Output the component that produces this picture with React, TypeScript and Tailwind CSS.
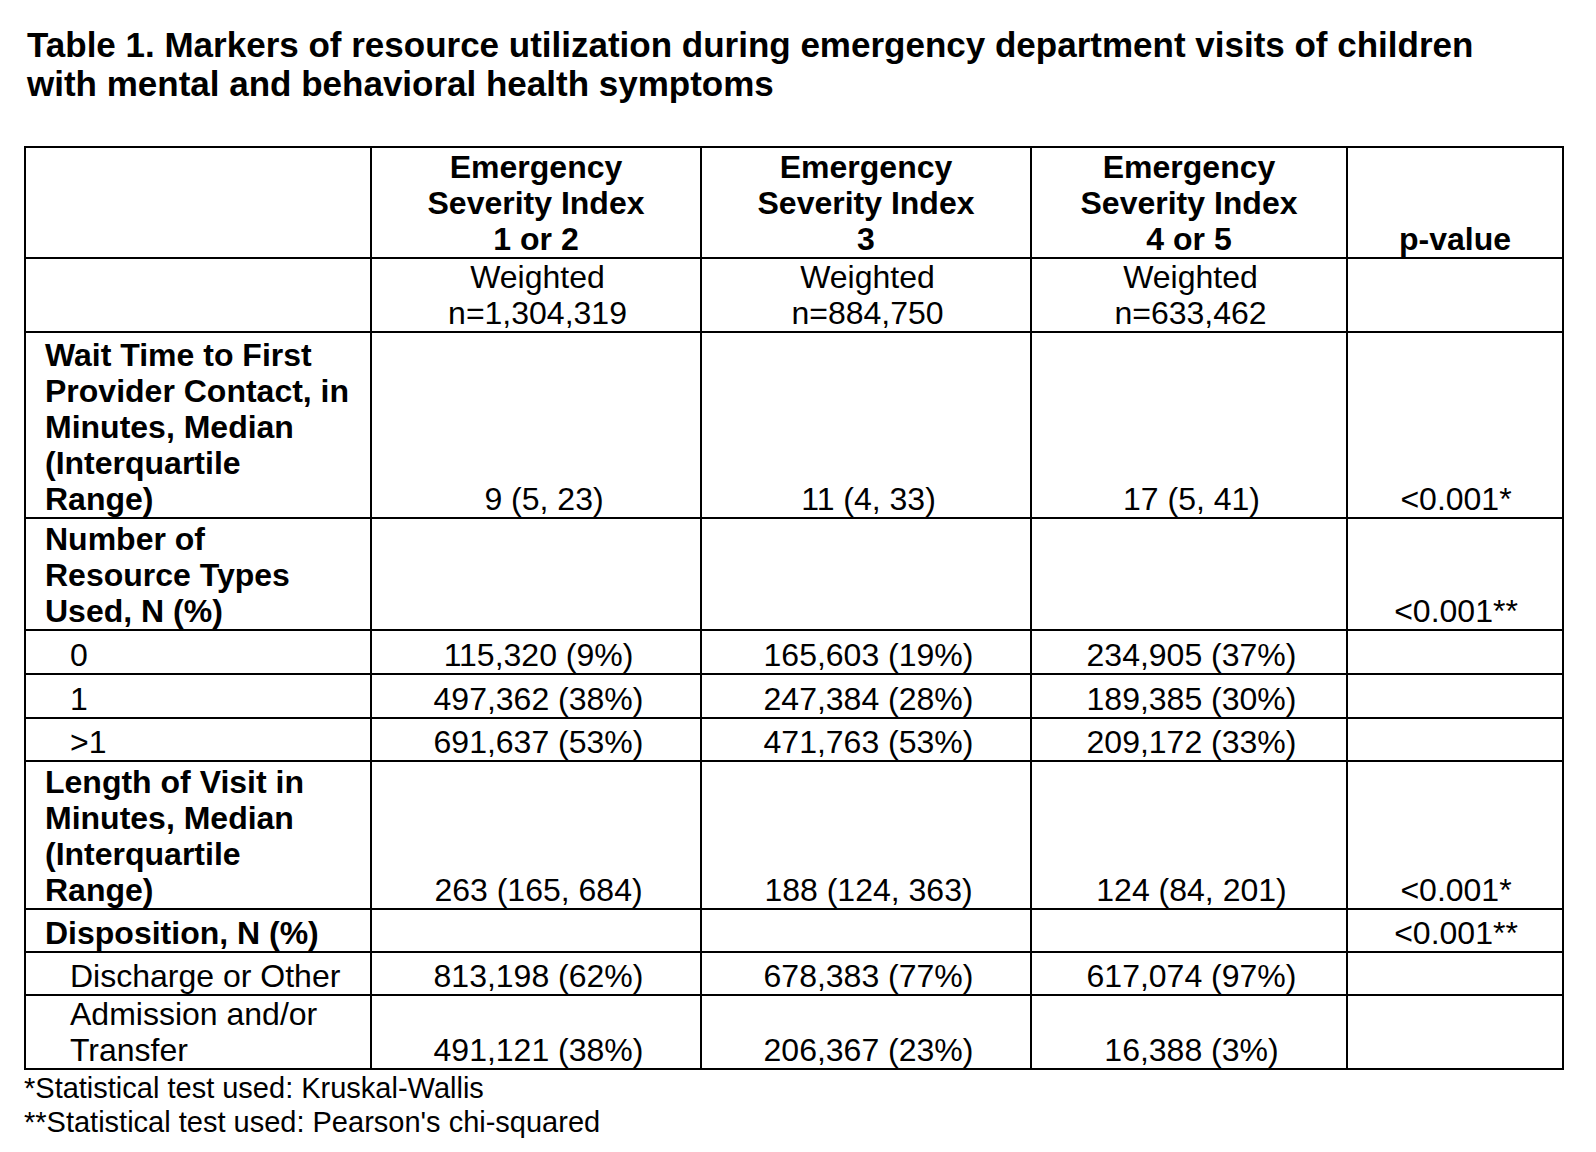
type Row = {
  label: string[];
  bold?: boolean;
  indent?: boolean;
  values: string[][];
  p?: string;
  h: string;
};

const rows: Row[] = [
  {
    label: ["Wait Time to First", "Provider Contact, in", "Minutes, Median", "(Interquartile", "Range)"],
    bold: true,
    values: [["9 (5, 23)"], ["11 (4, 33)"], ["17 (5, 41)"]],
    p: "<0.001*",
    h: "h-[186px]",
  },
  {
    label: ["Number of", "Resource Types", "Used, N (%)"],
    bold: true,
    values: [[], [], []],
    p: "<0.001**",
    h: "h-[112px]",
  },
  { label: ["0"], indent: true, values: [["115,320 (9%)"], ["165,603 (19%)"], ["234,905 (37%)"]], h: "h-[44px]" },
  { label: ["1"], indent: true, values: [["497,362 (38%)"], ["247,384 (28%)"], ["189,385 (30%)"]], h: "h-[44px]" },
  { label: [">1"], indent: true, values: [["691,637 (53%)"], ["471,763 (53%)"], ["209,172 (33%)"]], h: "h-[43px]" },
  {
    label: ["Length of Visit in", "Minutes, Median", "(Interquartile", "Range)"],
    bold: true,
    values: [["263 (165, 684)"], ["188 (124, 363)"], ["124 (84, 201)"]],
    p: "<0.001*",
    h: "h-[148px]",
  },
  { label: ["Disposition, N (%)"], bold: true, values: [[], [], []], p: "<0.001**", h: "h-[43px]" },
  {
    label: ["Discharge or Other"],
    indent: true,
    values: [["813,198 (62%)"], ["678,383 (77%)"], ["617,074 (97%)"]],
    h: "h-[43px]",
  },
  {
    label: ["Admission and/or", "Transfer"],
    indent: true,
    values: [["491,121 (38%)"], ["206,367 (23%)"], ["16,388 (3%)"]],
    h: "h-[74px]",
  },
];

function Lines({ lines }: { lines: string[] }) {
  return (
    <>
      {lines.map((l, i) => (
        <span key={i} className="block whitespace-nowrap">
          {l}
        </span>
      ))}
    </>
  );
}

const cell = "border-2 border-black align-bottom p-0";

export default function App() {
  return (
    <div className="bg-white text-black min-h-[1152px] px-[24px] pt-[25px] font-['Liberation_Sans',Arial,sans-serif]">
      <h1 className="pl-[3px] text-[35px] leading-[39px] font-bold">
        Table 1. Markers of resource utilization during emergency department visits of children
        <br />
        with mental and behavioral health symptoms
      </h1>

      <table className="mt-[43px] table-fixed border-collapse text-[32px] leading-[36px]">
        <colgroup>
          <col className="w-[346px]" />
          <col className="w-[330px]" />
          <col className="w-[330px]" />
          <col className="w-[316px]" />
          <col className="w-[216px]" />
        </colgroup>
        <thead>
          <tr className="h-[111px] text-center">
            <th className={cell}></th>
            <th className={`${cell} font-bold`}>
              <Lines lines={["Emergency", "Severity Index", "1 or 2"]} />
            </th>
            <th className={`${cell} font-bold`}>
              <Lines lines={["Emergency", "Severity Index", "3"]} />
            </th>
            <th className={`${cell} font-bold`}>
              <Lines lines={["Emergency", "Severity Index", "4 or 5"]} />
            </th>
            <th className={`${cell} font-bold`}>p-value</th>
          </tr>
        </thead>
        <tbody>
          <tr className="h-[74px] text-center">
            <td className={cell}></td>
            <td className={`${cell} pl-[3px]`}>
              <Lines lines={["Weighted", "n=1,304,319"]} />
            </td>
            <td className={`${cell} pl-[3px]`}>
              <Lines lines={["Weighted", "n=884,750"]} />
            </td>
            <td className={`${cell} pl-[3px]`}>
              <Lines lines={["Weighted", "n=633,462"]} />
            </td>
            <td className={cell}></td>
          </tr>
          {rows.map((r, i) => (
            <tr key={i} className={r.h}>
              <td
                className={`${cell} text-left ${r.indent ? "pl-[44px]" : "pl-[19px]"} ${
                  r.bold ? "font-bold" : ""
                }`}
              >
                <Lines lines={r.label} />
              </td>
              {r.values.map((v, j) => (
                <td key={j} className={`${cell} text-center ${i === 0 && j === 0 ? "pl-[16px]" : "pl-[5px]"}`}>
                  <Lines lines={v} />
                </td>
              ))}
              <td className={`${cell} text-center pl-[2px]`}>{r.p ?? ""}</td>
            </tr>
          ))}
        </tbody>
      </table>

      <div className="text-[29px] leading-[34px] pt-[1px]">
        <p>*Statistical test used: Kruskal-Wallis</p>
        <p>**Statistical test used: Pearson's chi-squared</p>
      </div>
    </div>
  );
}
